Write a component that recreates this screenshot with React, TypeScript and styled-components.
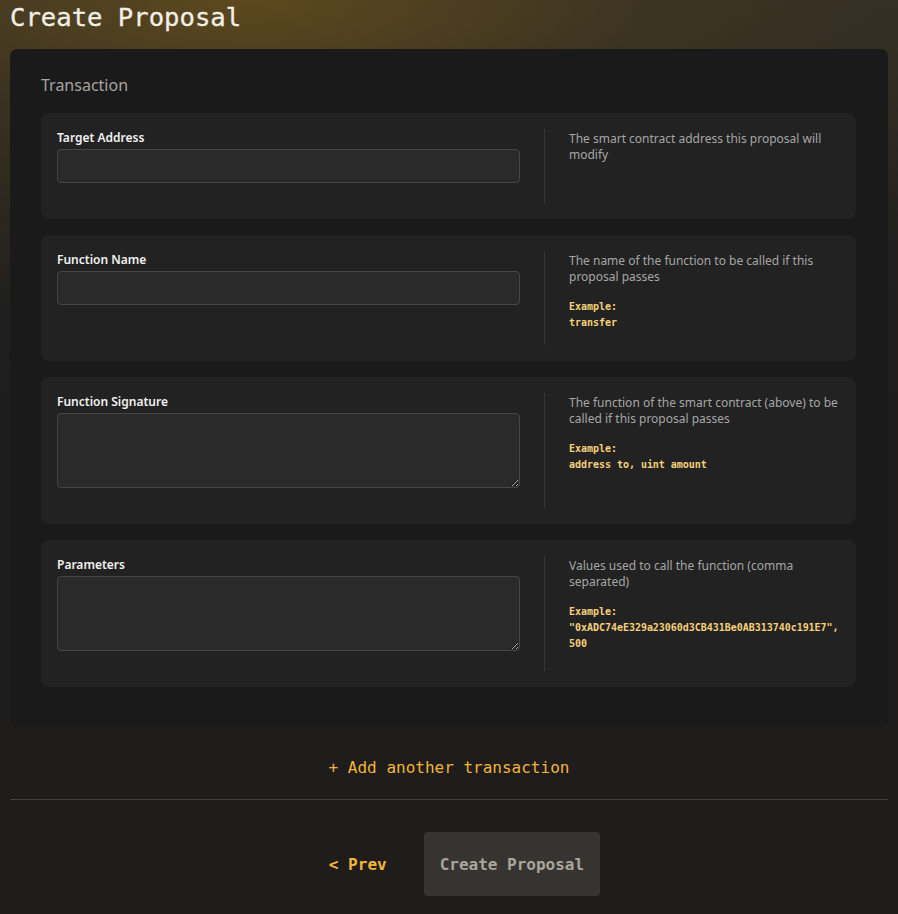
import React from "react";
import styled, { createGlobalStyle } from "styled-components";

const GlobalStyle = createGlobalStyle`
  html, body {
    margin: 0;
    padding: 0;
    background: #1e1d1b;
  }
  * { box-sizing: border-box; }
`;

const MONO = `"DejaVu Sans Mono", "Liberation Mono", monospace`;
const SANS = `"Noto Sans", "Open Sans", sans-serif`;

const Page = styled.div`
  min-height: 914px;
  padding: 0 10px 20px;
  background:
    radial-gradient(110% 320px at 28% 0%, rgba(98, 76, 28, 0.9) 0%, rgba(80, 64, 30, 0.45) 40%, rgba(30, 29, 27, 0) 100%),
    linear-gradient(180deg, #2c2a26 0px, #22211f 200px, #1e1d1b 420px);
  font-family: ${SANS};
`;

const Title = styled.h1`
  margin: 0;
  font-family: ${MONO};
  font-weight: 400;
  font-size: 25.6px;
  line-height: 34px;
  color: #f3efe6;
  -webkit-text-stroke: 0.3px #f3efe6;
`;

const Card = styled.section`
  margin-top: 15px;
  background: #1b1a1b;
  border-radius: 7px;
  padding: 24px 32px 40px 31px;
  display: flex;
  flex-direction: column;
  gap: 16px;
`;

const SectionTitle = styled.h2`
  margin: 0;
  font-family: ${SANS};
  font-weight: 400;
  font-size: 16px;
  line-height: 24px;
  color: #a7a49e;
`;

const Panel = styled.div`
  background: #222222;
  border-radius: 8px;
  padding: 16px;
  display: grid;
  grid-template-columns: minmax(0, 463fr) 1px minmax(0, 271fr);
  column-gap: 24px;
`;

const FieldCol = styled.div`
  display: flex;
  flex-direction: column;
  padding-bottom: 20px;
`;

const Label = styled.label`
  font-size: 12px;
  font-weight: 600;
  line-height: 16px;
  color: #f1f1f1;
  padding-top: 1px;
  margin-bottom: 3px;
`;

const TextInput = styled.input`
  width: 100%;
  height: 34px;
  background: #2a2a2a;
  border: 1px solid #464646;
  border-radius: 4px;
  color: #eee;
  outline: none;
`;

const TextArea = styled.textarea`
  width: 100%;
  height: 75px;
  background: #2a2a2a;
  border: 1px solid #464646;
  border-radius: 4px;
  color: #eee;
  outline: none;
  display: block;
  resize: vertical;
  color-scheme: dark;
`;

const VRule = styled.div`
  width: 1px;
  background: #363636;
`;

const HelpCol = styled.div`
  padding-top: 2px;
  padding-bottom: 14px;
`;

const HelpText = styled.p`
  margin: 0;
  font-size: 12px;
  line-height: 16px;
  color: #a6a6a6;
`;

const Example = styled.div`
  margin-top: 14px;
  font-family: ${MONO};
  font-size: 10px;
  font-weight: 700;
  line-height: 16px;
  letter-spacing: -0.03px;
  color: #f6d07a;
`;

const AddButton = styled.button`
  display: block;
  margin: 29px auto 0;
  padding: 0;
  background: none;
  border: none;
  font-family: ${MONO};
  font-size: 16px;
  line-height: 24px;
  color: #f2b43a;
  cursor: pointer;
`;

const HRule = styled.hr`
  margin: 19px 0 0;
  border: none;
  height: 1px;
  background: #42403d;
`;

const Actions = styled.div`
  margin-top: 32px;
  display: flex;
  justify-content: center;
  gap: 10px;
`;

const PrevButton = styled.button`
  height: 64px;
  padding: 0 27px 0 31px;
  background: none;
  border: none;
  font-family: ${MONO};
  font-weight: 700;
  font-size: 16px;
  color: #f2b43a;
  cursor: pointer;
`;

const SubmitButton = styled.button`
  height: 64px;
  padding: 0 16px;
  background: #363431;
  border: none;
  border-radius: 4px;
  font-family: ${MONO};
  font-weight: 700;
  font-size: 16px;
  color: #a9a59d;
`;

type Field = {
  label: string;
  help: string;
  multiline?: boolean;
  example?: string[];
};

const fields: Field[] = [
  { label: "Target Address", help: "The smart contract address this proposal will modify" },
  {
    label: "Function Name",
    help: "The name of the function to be called if this proposal passes",
    example: ["transfer"],
  },
  {
    label: "Function Signature",
    help: "The function of the smart contract (above) to be called if this proposal passes",
    multiline: true,
    example: ["address to, uint amount"],
  },
  {
    label: "Parameters",
    help: "Values used to call the function (comma separated)",
    multiline: true,
    example: ['"0xADC74eE329a23060d3CB431Be0AB313740c191E7", 500'],
  },
];

export default function App() {
  return (
    <>
      <GlobalStyle />
      <Page>
        <Title>Create Proposal</Title>
        <Card>
          <SectionTitle>Transaction</SectionTitle>
          {fields.map((f) => (
            <Panel key={f.label}>
              <FieldCol>
                <Label>{f.label}</Label>
                {f.multiline ? <TextArea /> : <TextInput />}
              </FieldCol>
              <VRule />
              <HelpCol>
                <HelpText>{f.help}</HelpText>
                {f.example && (
                  <Example>
                    <div>Example:</div>
                    {f.example.map((e) => (
                      <div key={e}>{e}</div>
                    ))}
                  </Example>
                )}
              </HelpCol>
            </Panel>
          ))}
        </Card>
        <AddButton>+ Add another transaction</AddButton>
        <HRule />
        <Actions>
          <PrevButton>&lt; Prev</PrevButton>
          <SubmitButton>Create Proposal</SubmitButton>
        </Actions>
      </Page>
    </>
  );
}
